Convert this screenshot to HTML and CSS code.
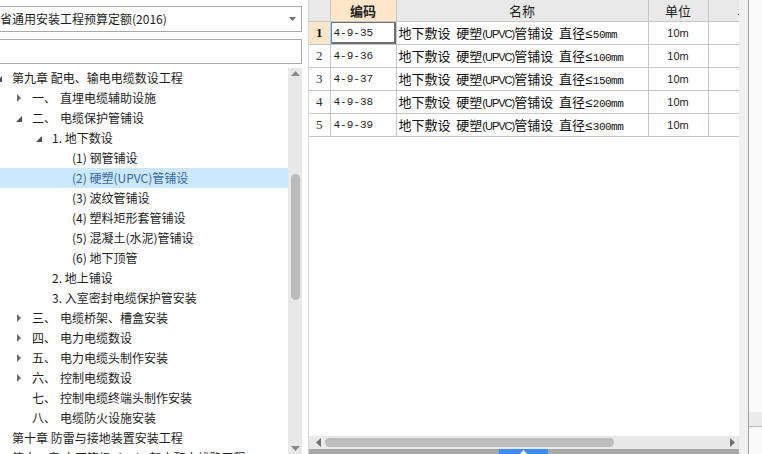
FILE: index.html
```html
<!DOCTYPE html>
<html lang="zh">
<head>
    <meta charset="UTF-8">
    <title>定额库</title>
    <link rel="stylesheet" href="styles.css">
</head>
<body>
    <div class="side">
        <div class="combo">
            <span class="combo-text">湖北省通用安装工程预算定额(2016)</span>
            <svg class="combo-arrow" width="7" height="4" viewBox="0 0 7 4"><path d="M0 0H7L3.5 4Z" fill="#707070"/></svg>
        </div>
        <div class="search"></div>
        <div class="tree-wrap">
            <ul class="tree">
                <li class="node lv0"><i class="tw open"></i>第九章 配电、输电电缆数设工程</li>
                <li class="node lv1"><i class="tw shut"></i><span class="num">一、</span>直埋电缆辅助设施</li>
                <li class="node lv1"><i class="tw open"></i><span class="num">二、</span>电缆保护管铺设</li>
                <li class="node lv2"><i class="tw open"></i>1. 地下数设</li>
                <li class="node lv3"><i class="tw"></i>(1) 钢管铺设</li>
                <li class="node lv3 selected"><i class="tw"></i>(2) 硬塑(UPVC)管铺设</li>
                <li class="node lv3"><i class="tw"></i>(3) 波纹管铺设</li>
                <li class="node lv3"><i class="tw"></i>(4) 塑料矩形套管铺设</li>
                <li class="node lv3"><i class="tw"></i>(5) 混凝土(水泥)管铺设</li>
                <li class="node lv3"><i class="tw"></i>(6) 地下顶管</li>
                <li class="node lv2"><i class="tw"></i>2. 地上铺设</li>
                <li class="node lv2"><i class="tw"></i>3. 入室密封电缆保护管安装</li>
                <li class="node lv1"><i class="tw shut"></i><span class="num">三、</span>电缆桥架、槽盒安装</li>
                <li class="node lv1"><i class="tw shut"></i><span class="num">四、</span>电力电缆数设</li>
                <li class="node lv1"><i class="tw shut"></i><span class="num">五、</span>电力电缆头制作安装</li>
                <li class="node lv1"><i class="tw shut"></i><span class="num">六、</span>控制电缆数设</li>
                <li class="node lv1"><i class="tw"></i><span class="num">七、</span>控制电缆终端头制作安装</li>
                <li class="node lv1"><i class="tw"></i><span class="num">八、</span>电缆防火设施安装</li>
                <li class="node lv0"><i class="tw"></i>第十章 防雷与接地装置安装工程</li>
                <li class="node lv0"><i class="tw"></i>第十一章 电压等级≤10kV架空配电线路工程</li>
            </ul>
            <div class="vscroll">
                <svg width="9" height="5" viewBox="0 0 9 5"><path d="M0 5H9L4.5 0Z" fill="#8a8a8a"/></svg>
                <div class="vtrack"><div class="vthumb"></div></div>
                <svg width="9" height="5" viewBox="0 0 9 5"><path d="M0 0H9L4.5 5Z" fill="#8a8a8a"/></svg>
            </div>
        </div>
    </div>

    <div class="gap"></div>

    <div class="main">
        <div class="grid-area">
            <table class="grid">
                <colgroup>
                    <col class="c-no">
                    <col class="c-code">
                    <col class="c-name">
                    <col class="c-unit">
                    <col class="c-more">
                </colgroup>
                <thead>
                    <tr>
                        <th></th>
                        <th class="hot">编码</th>
                        <th>名称</th>
                        <th>单位</th>
                        <th class="clip">单</th>
                    </tr>
                </thead>
                <tbody>
                    <tr>
                        <td class="no hot">1</td>
                        <td class="code current">4-9-35</td>
                        <td class="name">地下敷设 硬塑<span class="tight">(UPVC)</span>管铺设 直径≤<span class="lat">50mm</span></td>
                        <td class="unit">10m</td>
                        <td></td>
                    </tr>
                    <tr>
                        <td class="no">2</td>
                        <td class="code">4-9-36</td>
                        <td class="name">地下敷设 硬塑<span class="tight">(UPVC)</span>管铺设 直径≤<span class="lat">100mm</span></td>
                        <td class="unit">10m</td>
                        <td></td>
                    </tr>
                    <tr>
                        <td class="no">3</td>
                        <td class="code">4-9-37</td>
                        <td class="name">地下敷设 硬塑<span class="tight">(UPVC)</span>管铺设 直径≤<span class="lat">150mm</span></td>
                        <td class="unit">10m</td>
                        <td></td>
                    </tr>
                    <tr>
                        <td class="no">4</td>
                        <td class="code">4-9-38</td>
                        <td class="name">地下敷设 硬塑<span class="tight">(UPVC)</span>管铺设 直径≤<span class="lat">200mm</span></td>
                        <td class="unit">10m</td>
                        <td></td>
                    </tr>
                    <tr>
                        <td class="no">5</td>
                        <td class="code">4-9-39</td>
                        <td class="name">地下敷设 硬塑<span class="tight">(UPVC)</span>管铺设 直径≤<span class="lat">300mm</span></td>
                        <td class="unit">10m</td>
                        <td></td>
                    </tr>
                </tbody>
            </table>
            <div class="hscroll">
                <svg width="5" height="9" viewBox="0 0 5 9"><path d="M5 0V9L0 4.5Z" fill="#707070"/></svg>
                <div class="htrack"><div class="hthumb"></div></div>
                <svg width="5" height="9" viewBox="0 0 5 9"><path d="M0 0V9L5 4.5Z" fill="#707070"/></svg>
            </div>
            <div class="bottom-bar">
                <div class="grip">
                    <svg width="9" height="5" viewBox="0 0 9 5"><path d="M0 5H9L4.5 0Z" fill="#ffffff"/></svg>
                </div>
            </div>
        </div>
        <div class="vbar"></div>
    </div>
    <div class="edge">
        <div class="edge-block"></div>
    </div>
</body>
</html>
```

FILE: styles.css
```css
:root {
    --border: #a9a9a9;
    --grid-line: #c6c6c6;
    --head-bg: #e9e9e9;
    --hot-bg: #fde6c9;
    --select-bg: #cce8ff;
    --text: #1e1e1e;
}
* {
    box-sizing: border-box;
}
html, body {
    margin: 0;
    width: 762px;
    height: 454px;
    overflow: hidden;
    background: #ffffff;
}
body {
    display: flex;
    font-family: "Noto Sans CJK SC", "Noto Sans", sans-serif;
    font-size: 12px;
    color: var(--text);
}

/* left side */
.side {
    width: 302px;
    flex: none;
    display: flex;
    flex-direction: column;
    padding-top: 6px;
}
.combo {
    height: 26px;
    border: 1px solid var(--border);
    border-left: none;
    display: flex;
    align-items: center;
    justify-content: space-between;
    padding-right: 5px;
    overflow: hidden;
    white-space: nowrap;
}
.combo-text {
    margin-left: -24px;
    line-height: 24px;
}
.search {
    height: 25px;
    margin-top: 7px;
    border: 1px solid var(--border);
    border-left: none;
}
.tree-wrap {
    flex: 1;
    display: flex;
    margin-top: 4px;
    min-height: 0;
}
.tree {
    list-style: none;
    margin: 0;
    padding: 0;
    flex: 1;
    overflow: hidden;
}
.node {
    height: 20px;
    line-height: 20px;
    white-space: nowrap;
    display: flex;
    align-items: center;
}
.node.selected {
    background: var(--select-bg);
    color: #3568a8;
}
.lv0 { padding-left: 0; }
.lv1 { padding-left: 16px; }
.lv2 { padding-left: 36px; }
.lv3 { padding-left: 56px; }
.lv0 .tw { margin-left: -4px; }
.tw {
    width: 16px;
    height: 20px;
    flex: none;
    position: relative;
}
.tw.shut::before {
    content: "";
    position: absolute;
    left: 1px;
    top: 6px;
    border-left: 4px solid #6a6a6a;
    border-top: 4px solid transparent;
    border-bottom: 4px solid transparent;
}
.tw.open::before {
    content: "";
    position: absolute;
    left: 0;
    top: 8px;
    border-right: 6px solid #505050;
    border-top: 6px solid transparent;
}
.num {
    display: inline-block;
    width: 28px;
}
.vscroll {
    width: 14px;
    flex: none;
    background: #e8e8e8;
    display: flex;
    flex-direction: column;
    align-items: center;
    padding: 3px 0 3px;
    gap: 3px;
}
.vtrack {
    flex: 1;
    width: 100%;
    padding: 95px 2px 0 3px;
}
.vthumb {
    height: 126px;
    background: #bcbcbc;
    border-radius: 5px;
}

.gap {
    width: 6px;
    flex: none;
}

/* right side grid */
.main {
    width: 441px;
    flex: none;
    display: flex;
    border-left: 1px solid #d4d4d4;
    border-right: 1px solid #a0a0a0;
}
.grid-area {
    width: 430px;
    flex: none;
    display: flex;
    flex-direction: column;
    overflow: hidden;
}
.grid {
    border-collapse: collapse;
    table-layout: fixed;
    width: 431px;
}
.c-no { width: 21px; }
.c-code { width: 66px; }
.c-name { width: 252px; }
.c-unit { width: 60px; }
.c-more { width: 32px; }
.grid th {
    height: 21px;
    padding: 0;
    background: var(--head-bg);
    border: 1px solid var(--grid-line);
    border-top: none;
    font-weight: normal;
    font-size: 13px;
    color: #222;
}
.grid th:first-child {
    border-left: none;
}
.grid th.hot {
    background: var(--hot-bg);
    font-weight: bold;
}
.grid th.clip {
    text-align: left;
    padding-left: 29px;
    overflow: hidden;
}
.grid td {
    height: 23px;
    padding: 0 3px;
    border: 1px solid var(--grid-line);
    white-space: nowrap;
    overflow: hidden;
}
.grid td:first-child {
    border-left: none;
}
.grid td.no {
    text-align: center;
    padding: 0;
    font-family: "Liberation Serif", serif;
    font-size: 13px;
    color: #333;
}
.grid td.no.hot {
    background: var(--hot-bg);
    font-weight: bold;
    color: #111;
}
.grid td.code {
    font-family: "Liberation Mono", monospace;
    font-size: 11px;
}
.grid td.current {
    box-shadow: inset 1px 0 0 #3a8ee6, inset -2px -2px 0 #707070, inset 0 1px 0 #707070;
}
.grid td.name {
    font-family: "Liberation Mono", "Noto Sans CJK SC", monospace;
    font-size: 13px;
    padding-left: 2px;
    word-spacing: -2px;
    color: #111;
}
.tight {
    font-family: "Liberation Sans", sans-serif;
    font-size: 11px;
    letter-spacing: -1px;
}
.lat {
    font-size: 11px;
    letter-spacing: -0.5px;
}
.grid td.unit {
    text-align: center;
    font-family: "Liberation Sans", sans-serif;
    font-size: 11px;
}
.hscroll {
    margin-top: auto;
    height: 13px;
    background: #e8e8e8;
    display: flex;
    align-items: center;
    padding: 0 4px 0 7px;
    gap: 4px;
    flex: none;
}
.htrack {
    flex: 1;
    height: 9px;
    padding-right: 112px;
}
.hthumb {
    height: 9px;
    background: #bcbcbc;
    border-radius: 5px;
}
.bottom-bar {
    height: 5px;
    background: #a8a8a8;
    flex: none;
    display: flex;
    padding-left: 190px;
}
.grip {
    width: 49px;
    height: 5px;
    background: #3c8ff0;
    display: flex;
    justify-content: center;
    overflow: hidden;
}
.grip svg {
    margin-top: 1px;
}
.vbar {
    flex: 1;
    background: #f0f0f0;
}
.edge {
    flex: 1;
    position: relative;
    background: #fafafa;
}
.edge-block {
    margin-top: 412px;
    height: 15px;
    background: #ececec;
    border-bottom: 1px solid #c0c0c0;
}
```
